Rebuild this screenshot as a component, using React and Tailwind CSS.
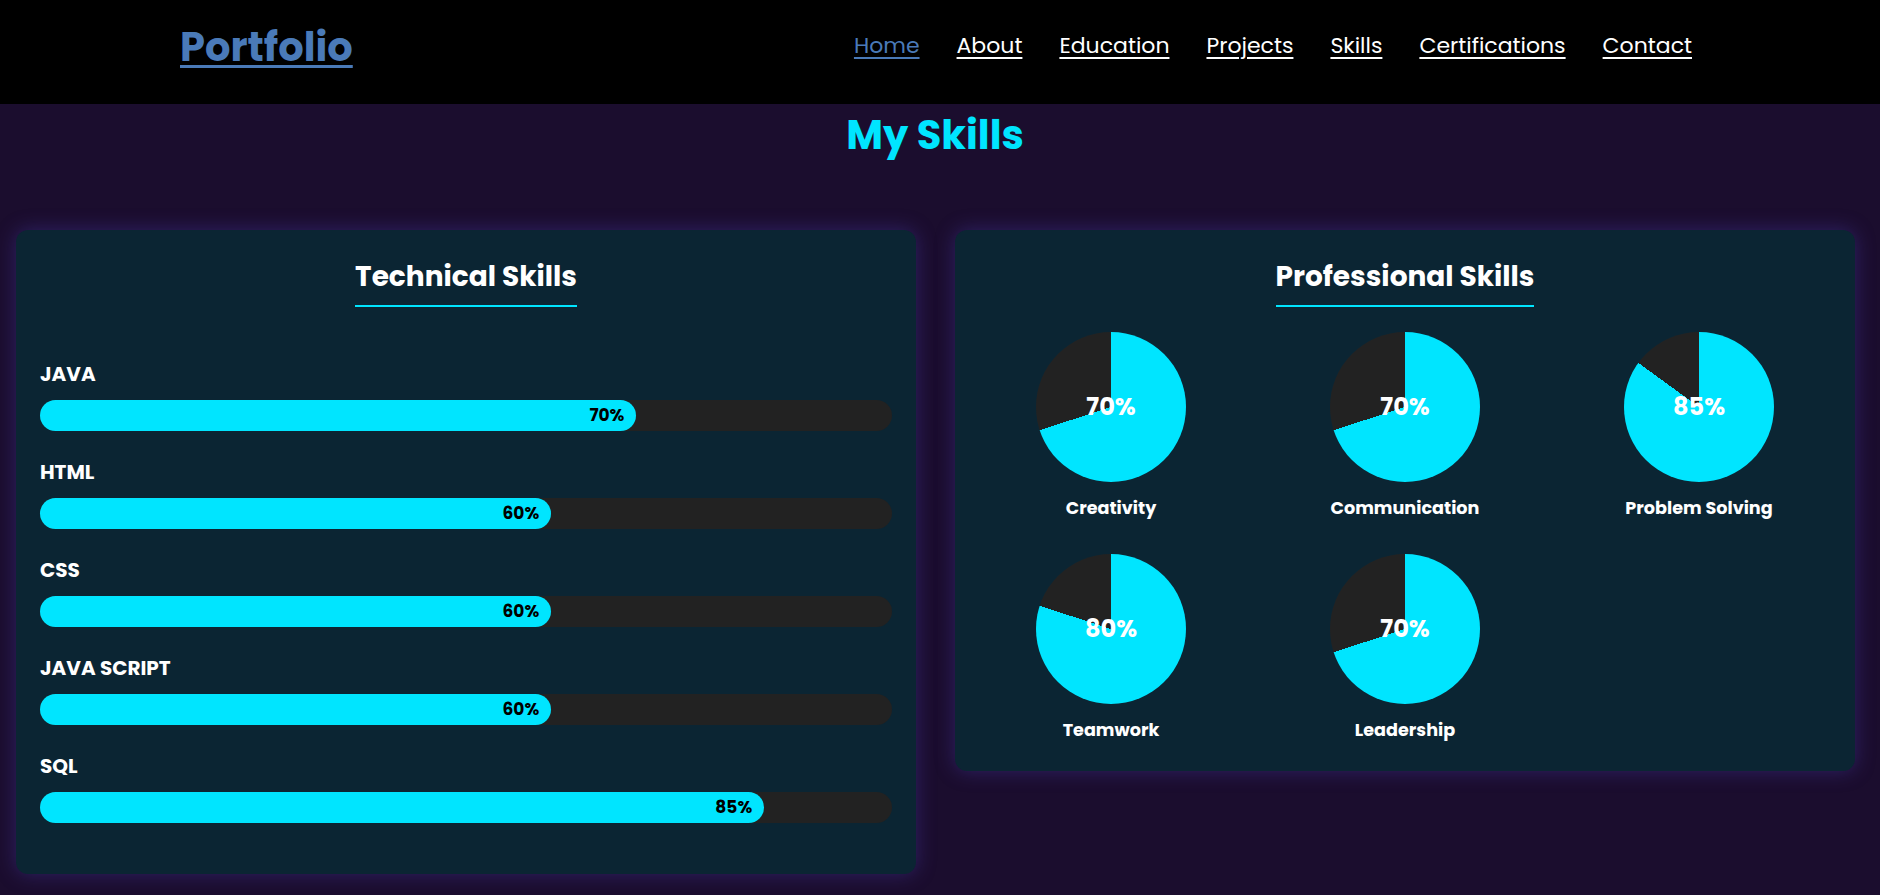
import { Fragment } from "react"

const technicalSkills = [
    { name: 'JAVA', level: 70 },
    { name: 'HTML', level: 60 },
    { name: 'CSS', level: 60 },
    { name: 'JAVA SCRIPT', level: 60 },
    { name: 'SQL', level: 85 },
]

const professionalSkills = [
    { name: 'Creativity', level: 70 },
    { name: 'Communication', level: 70 },
    { name: 'Problem Solving', level: 85 },
    { name: 'Teamwork', level: 80 },
    { name: 'Leadership', level: 70 },
]

const navLinks = ['Home', 'About', 'Education', 'Projects', 'Skills', 'Certifications', 'Contact']

const font = { fontFamily: '"Poppins", "Inter", "Noto Sans", sans-serif' }

//Horizontal bar used for the technical skills
function SkillBar({ name, level }) {
    return (
        <div className="flex flex-col">
            <p className="text-white font-bold text-[20px] leading-[24px]">{name}</p>
            <div className="mt-[14px] w-full h-[31px] bg-[#222222] rounded-full">
                <div className="h-full bg-[#00e5ff] rounded-full flex items-center justify-end pr-[12px]" style={{ width: `${level}%` }}>
                    <span className="text-black font-bold text-[17px]">{level}%</span>
                </div>
            </div>
        </div>
    )
}

//Pie chart used for the professional skills
function SkillPie({ name, level }) {
    return (
        <div className="flex flex-col items-center">
            <div className="w-[150px] h-[150px] rounded-full flex items-center justify-center" style={{ background: `conic-gradient(#00e5ff 0% ${level}%, #222222 ${level}% 100%)` }}>
                <span className="text-white font-bold text-[24px] leading-none">{level}%</span>
            </div>
            <p className="mt-[14px] text-white font-bold text-[17.6px] leading-[24px]">{name}</p>
        </div>
    )
}

function App() {
    return (
        <Fragment>
            <div className="min-h-[895px] w-full bg-[#1b0d2e]" style={font}>
                <header className="h-[104px] bg-black flex items-center justify-between pl-[180px] pr-[188px] pb-[10px]">
                    <a href="#" className="text-[#4a7ab8] font-bold text-[40px] leading-none underline underline-offset-[4px] decoration-[3px]">Portfolio</a>
                    <nav className="flex gap-[37px] mb-[3px]">
                        {navLinks.map(link => {
                            return <a key={link} href="#" className={`text-[22px] underline underline-offset-[4px] ${link === 'Home' ? 'text-[#4a7ab8]' : 'text-white'}`}>{link}</a>
                        })}
                    </nav>
                </header>

                <h2 className="text-center text-[#00e5ff] font-bold text-[40px] leading-[48px] mt-[7px] pr-[10px]">My Skills</h2>

                <div className="flex items-start gap-[39px] pl-[16px] pr-[25px] mt-[71px] pb-[22px]">
                    {/*Technical skills card */}
                    <div className="w-[900px] bg-[#0b2533] rounded-[12px] shadow-[0_0_20px_rgba(70,60,170,0.45)] px-[24px] pt-[28px] pb-[51px]">
                        <div className="flex justify-center">
                            <h3 className="text-white font-bold text-[28px] leading-[38px] pb-[9px] border-b-2 border-[#00e5ff]">Technical Skills</h3>
                        </div>
                        <div className="mt-[55px] flex flex-col gap-[29px]">
                            {technicalSkills.map(skill => {
                                return <SkillBar key={skill.name} name={skill.name} level={skill.level} />
                            })}
                        </div>
                    </div>

                    {/*Professional skills card */}
                    <div className="w-[900px] bg-[#0b2533] rounded-[12px] shadow-[0_0_20px_rgba(70,60,170,0.45)] px-[24px] pt-[28px] pb-[29px]">
                        <div className="flex justify-center">
                            <h3 className="text-white font-bold text-[28px] leading-[38px] pb-[9px] border-b-2 border-[#00e5ff]">Professional Skills</h3>
                        </div>
                        <div className="mt-[25px] grid grid-cols-3 gap-x-[30px] gap-y-[34px]">
                            {professionalSkills.map(skill => {
                                return <SkillPie key={skill.name} name={skill.name} level={skill.level} />
                            })}
                        </div>
                    </div>
                </div>
            </div>
        </Fragment>
    )
}
export default App
